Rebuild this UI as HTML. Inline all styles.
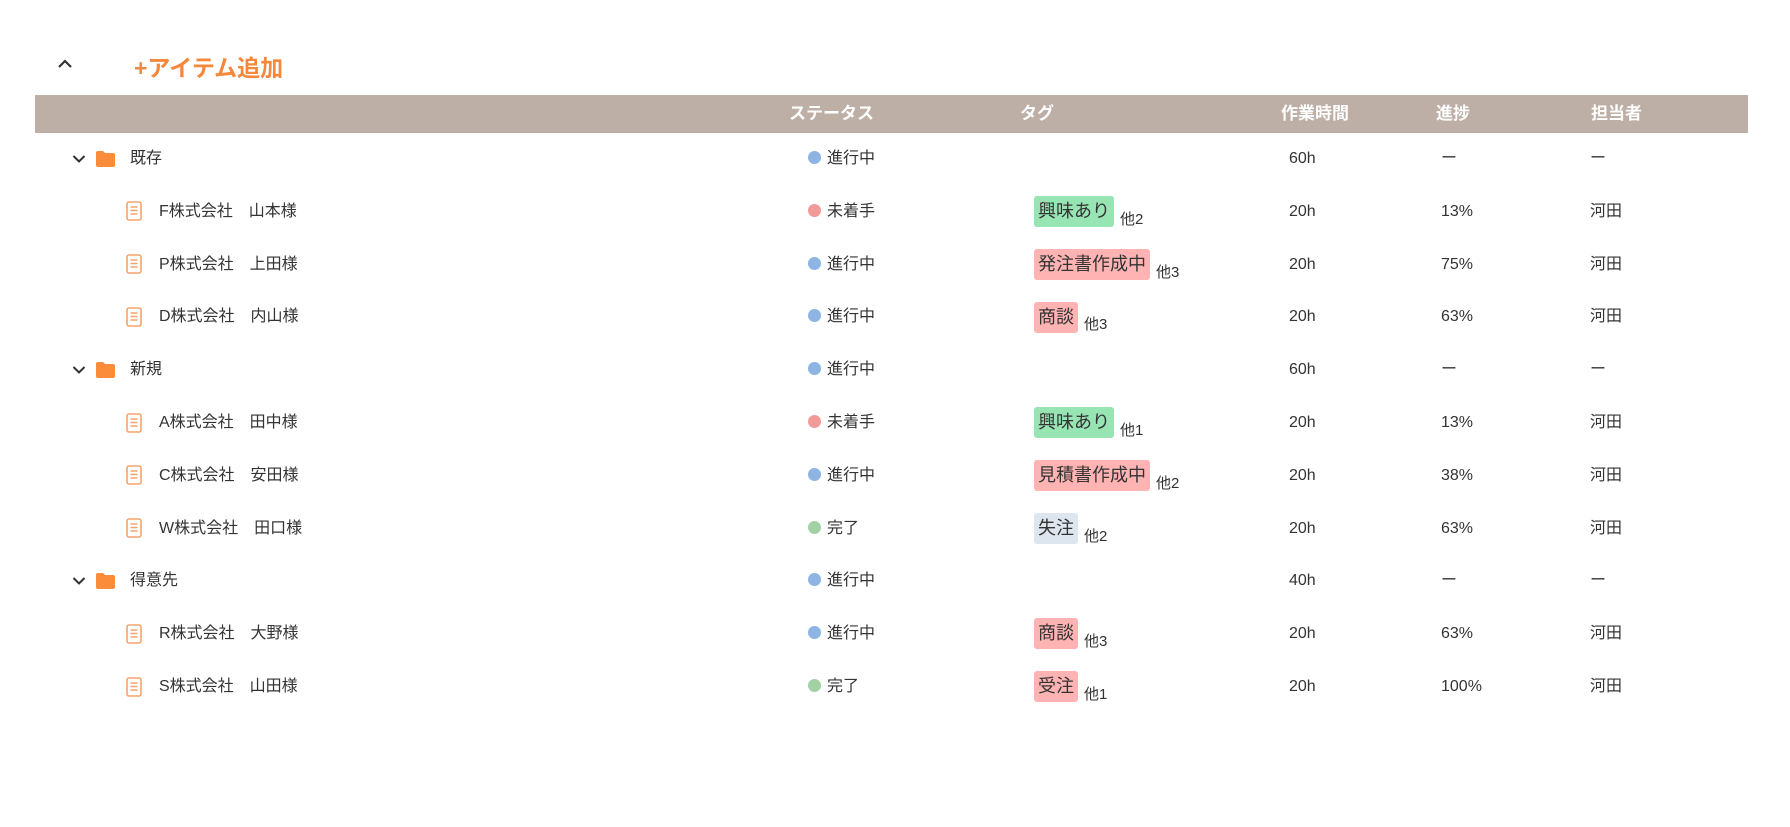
<!DOCTYPE html>
<html><head><meta charset="utf-8"><style>
*{margin:0;padding:0;box-sizing:border-box}
body{width:1790px;height:827px;background:#fff;font-family:"Liberation Sans","Noto Sans CJK JP",sans-serif;color:#333;position:relative;overflow:hidden}
.a{position:absolute;white-space:nowrap}
.hdr{position:absolute;left:35px;top:95px;width:1713px;height:38px;background:#bdafa6}
.h{position:absolute;top:0;line-height:38px;color:#fff;font-weight:bold;font-size:17px}
.row{position:absolute;left:0;width:1790px;height:53px}
.row .t{position:absolute;top:0;line-height:53px;height:53px;font-size:16px;white-space:nowrap}
.row .ic{position:absolute;top:50%;transform:translateY(-50%);line-height:0}
.dot{display:inline-block;width:13px;height:13px;border-radius:50%;vertical-align:-1px;margin-right:6px}
.tag{display:inline-block;padding:0 4px;height:31px;line-height:31px;border-radius:3px;font-size:18px;color:#333;vertical-align:middle}
.oth{font-size:15px;margin-left:6px;vertical-align:-8px}
</style></head><body>
<svg class="a" style="left:57px;top:58px" width="16" height="12" viewBox="0 0 16 12"><path d="M2 9 L8 3 L14 9" fill="none" stroke="#333" stroke-width="2.2"/></svg>
<div class="a" style="left:134px;top:49px;font-size:23px;font-weight:bold;color:#f5883a">+アイテム追加</div>
<div class="hdr">
<div class="h" style="left:754px">ステータス</div>
<div class="h" style="left:985px">タグ</div>
<div class="h" style="left:1246px">作業時間</div>
<div class="h" style="left:1401px">進捗</div>
<div class="h" style="left:1556px">担当者</div>
</div>
<div id="rows"></div>
<script>
const folder='<svg width="19" height="16" viewBox="0 0 19 16"><path d="M0 2 Q0 0 2 0 H7 L9 2 H17 Q19 2 19 4 V14 Q19 16 17 16 H2 Q0 16 0 14Z" fill="#fb8c3a"/></svg>';
const chev='<svg width="14" height="10" viewBox="0 0 14 10"><path d="M1.5 2 L7 7.5 L12.5 2" fill="none" stroke="#333" stroke-width="2"/></svg>';
const doc='<svg width="16" height="20" viewBox="0 0 16 20"><rect x="1" y="1" width="14" height="18" rx="2" fill="none" stroke="#f5a36a" stroke-width="1.6"/><path d="M4.5 6H11.5M4.5 9.5H11.5M4.5 13H11.5" stroke="#f5a36a" stroke-width="1.5"/></svg>';
const C={b:'#8db4e2',r:'#f09a9a',g:'#a3d1a6'},T={g:'#98e5b4',p:'#ffb3b3',l:'#dde6ef'};
const d=[
['f','既存','b','進行中',null,'60h','ー','ー'],
['i','F株式会社　山本様','r','未着手',['興味あり','g','他2'],'20h','13%','河田'],
['i','P株式会社　上田様','b','進行中',['発注書作成中','p','他3'],'20h','75%','河田'],
['i','D株式会社　内山様','b','進行中',['商談','p','他3'],'20h','63%','河田'],
['f','新規','b','進行中',null,'60h','ー','ー'],
['i','A株式会社　田中様','r','未着手',['興味あり','g','他1'],'20h','13%','河田'],
['i','C株式会社　安田様','b','進行中',['見積書作成中','p','他2'],'20h','38%','河田'],
['i','W株式会社　田口様','g','完了',['失注','l','他2'],'20h','63%','河田'],
['f','得意先','b','進行中',null,'40h','ー','ー'],
['i','R株式会社　大野様','b','進行中',['商談','p','他3'],'20h','63%','河田'],
['i','S株式会社　山田様','g','完了',['受注','p','他1'],'20h','100%','河田']];
let h='';
d.forEach((r,i)=>{
const top=132+i*52.8;
h+=`<div class="row" style="top:${top}px">`;
if(r[0]=='f'){h+=`<div class="ic" style="left:72px">${chev}</div><div class="ic" style="left:96px">${folder}</div><div class="t" style="left:130px">${r[1]}</div>`;}
else{h+=`<div class="ic" style="left:126px">${doc}</div><div class="t" style="left:159px">${r[1]}</div>`;}
h+=`<div class="t" style="left:808px"><span class="dot" style="background:${C[r[2]]}"></span>${r[3]}</div>`;
if(r[4])h+=`<div class="t" style="left:1034px"><span class="tag" style="background:${T[r[4][1]]}">${r[4][0]}</span><span class="oth">${r[4][2]}</span></div>`;
h+=`<div class="t" style="left:1289px">${r[5]}</div><div class="t" style="left:1441px">${r[6]}</div><div class="t" style="left:1590px">${r[7]}</div></div>`;
});
document.getElementById('rows').innerHTML=h;
</script>
</body></html>
